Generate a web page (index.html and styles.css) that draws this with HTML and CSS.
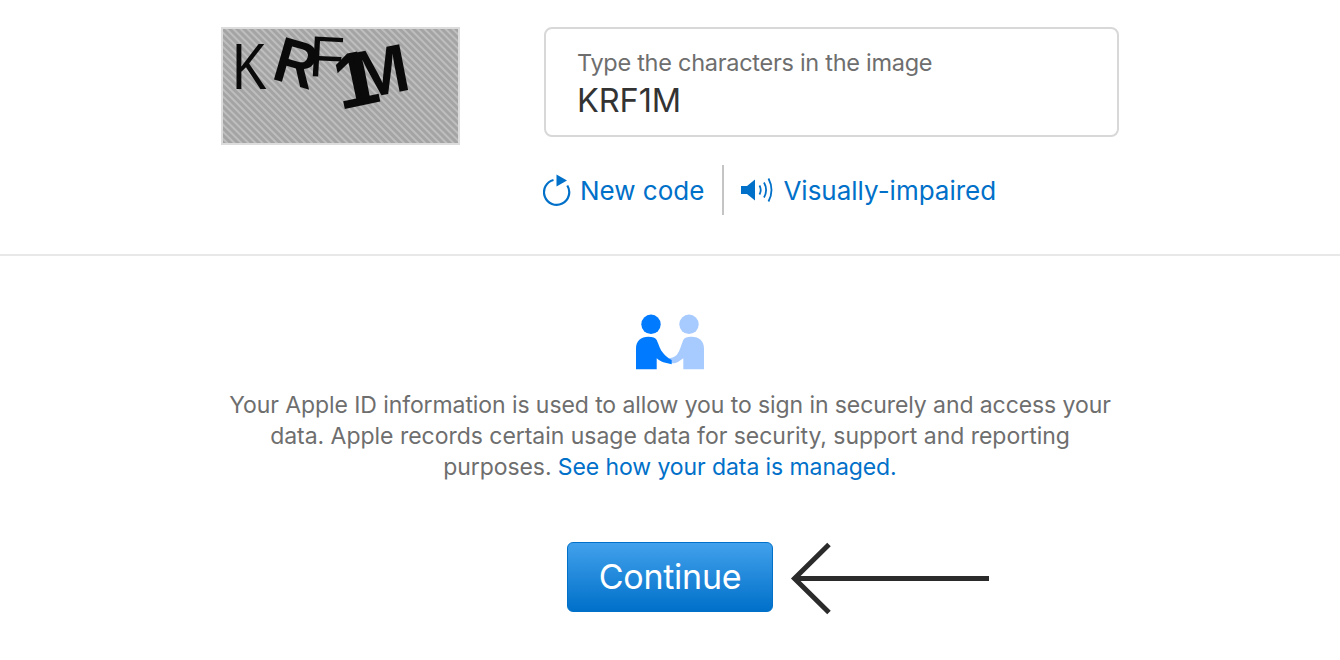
FILE: index.html
```html
<!DOCTYPE html>
<html lang="en">
<head>
<meta charset="utf-8">
<title>Apple ID</title>
<link rel="stylesheet" href="styles.css">
</head>
<body>
<section class="captcha-section">
  <div class="captcha-image" aria-label="Captcha image">
    <span class="cl cl-k">K</span>
    <span class="cl cl-r">R</span>
    <span class="cl cl-f">F</span>
    <span class="cl cl-1">1</span>
    <span class="cl cl-m">M</span>
  </div>
  <div class="captcha-form">
    <div class="field">
      <div class="field-label">Type the characters in the image</div>
      <div class="field-value">KRF1M</div>
    </div>
    <div class="links">
      <a class="link link-new">
        <svg class="icon-refresh" width="30" height="34" viewBox="0 0 30 34"><path d="M10.500 7A12.600 12.600 0 1 0 24.300 12.500" fill="none" stroke="#0070c9" stroke-width="2.200"/><path d="M13.500 1.500 L24 7.500 L13.500 13.500 Z" fill="#0070c9"/></svg>
        <span class="link-text">New code</span>
      </a>
      <span class="divider"></span>
      <a class="link link-audio">
        <svg class="icon-audio" width="34" height="30" viewBox="0 0 34 30"><path d="M1 11h6l8-6.500v21l-8-6.500H1z" fill="#0070c9"/><path d="M19.500 10.500q2.500 4.500 0 9M24 7.500q4.200 7.500 0 15M28.500 3.500q6 11.500 0 23" fill="none" stroke="#0070c9" stroke-width="1.800"/></svg>
        <span class="link-text">Visually-impaired</span>
      </a>
    </div>
  </div>
</section>
<section class="info">
  <svg class="icon-people" width="70" height="56" viewBox="0 0 70 56">
    <circle cx="54" cy="10.300" r="9.700" fill="#a8cbff"/>
    <path d="M69 55.300V34.300C69 27 64 22.700 56.700 22.700 52 22.700 49.500 23.500 48.300 26 46 31 45 37 41.700 41 39 43.500 36 44 33.300 44.300L36.700 49.300C39 49.500 41 49 43.300 47.700L48.300 44.300V55.300Z" fill="#a8cbff"/>
    <circle cx="16" cy="10.300" r="9.700" fill="#007aff"/>
    <path d="M1 55.300V34.300C1 27 6 22.700 13.300 22.700 17.500 22.700 20.500 23.500 21.700 26 24 31 25 36 28.300 39.300 30.500 42 33.500 44.500 36.700 46V50.300L28.300 48.300C26 47.500 23.500 46 21.700 44.300V55.300Z" fill="#007aff"/>
  </svg>
  <p class="info-text">Your Apple ID information is used to allow you to sign in securely and access your<br><span class="info-line">data. Apple records certain usage data for security, support and reporting</span><br>purposes. <a class="info-link">See how your data is managed.</a></p>
  <div class="actions">
    <button class="continue" type="button">Continue</button>
    <svg class="arrow" width="202" height="74" viewBox="0 0 202 74"><path d="M200 36.500H5.500M40 2.500 5.500 36.500 40 70.500" fill="none" stroke="#2b2b2b" stroke-width="5"/></svg>
  </div>
</section>
</body>
</html>
```

FILE: styles.css
```css
* { box-sizing: border-box; }
html, body { margin: 0; padding: 0; background: #fff; }
body {
  width: 1340px;
  height: 660px;
  overflow: hidden;
  font-family: "Inter", "Liberation Sans", sans-serif;
  color: #666;
}
.captcha-section {
  height: 256px;
  border-bottom: 2px solid #e8e8e8;
  padding: 27px 0 0 221px;
  display: flex;
  gap: 84px;
}
.captcha-image {
  position: relative;
  width: 239px;
  height: 118px;
  border: 2px solid #dcdcdc;
  background-color: #b4b4b4;
  background-image: repeating-linear-gradient(45deg, #a4a4a4 0 1.500px, #bebebe 2.500px 3.500px, #a4a4a4 4.500px 5px);
}
.cl {
  position: absolute;
  font-family: "Liberation Sans", sans-serif;
  color: #0a0a0a;
  line-height: 0.8;
  transform-origin: center;
}
.cl-k { left: 5px; top: 12px; font-size: 65px; font-weight: 400; transform: scaleX(0.8); }
.cl-r { left: 50px; top: 9px; font-size: 64px; font-weight: 700; transform: rotate(16deg) scaleX(0.9); }
.cl-f { left: 86px; top: 5px; font-size: 58px; font-weight: 400; transform: rotate(3deg); }
.cl-1 { left: 111px; top: 19px; font-size: 78px; font-weight: 700; transform: rotate(-12deg); }
.cl-m { left: 129px; top: 15px; font-size: 68px; font-weight: 700; transform: rotate(-11deg); }
.captcha-form { width: 575px; }
.field {
  height: 110px;
  border: 2px solid #d8d8d8;
  border-radius: 8px;
  padding: 19px 31px 0;
}
.field-label { font-size: 23.500px; line-height: 30px; letter-spacing: -0.280px; color: #6e6e6e; }
.field-value { font-size: 32.500px; line-height: 46px; letter-spacing: -0.100px; color: #333; }
.links {
  display: flex;
  align-items: center;
  margin-top: 28px;
  height: 50px;
}
.link {
  display: flex;
  align-items: center;
  color: #0070c9;
  font-size: 26px;
  white-space: nowrap;
}
.icon-refresh { margin-right: 7px; margin-left: -1px; }
.icon-audio { margin-right: 9px; }
.divider { width: 2px; height: 50px; background: #c4c4c4; margin: 0 16px 0 18px; }
.info {
  display: flex;
  flex-direction: column;
  align-items: center;
  padding-top: 58px;
}
.icon-people { display: block; }
.info-text {
  margin: 20px 0 0;
  text-align: center;
  font-size: 23px;
  line-height: 31px;
  letter-spacing: -0.085px;
  color: #6e6e6e;
}
.info-line { letter-spacing: -0.030px; }
.info-link { color: #0070c9; }
.actions {
  position: relative;
  margin-top: 59px;
}
.continue {
  display: block;
  width: 206px;
  height: 70px;
  border: 1px solid #0070c9;
  border-radius: 6px;
  background: linear-gradient(#42a1ec, #0070c9);
  color: #fff;
  font: 400 34px "Inter", "Liberation Sans", sans-serif;
  letter-spacing: -0.250px;
  padding: 0 0 2px;
}
.arrow {
  position: absolute;
  left: 222px;
  top: 0;
}
```
